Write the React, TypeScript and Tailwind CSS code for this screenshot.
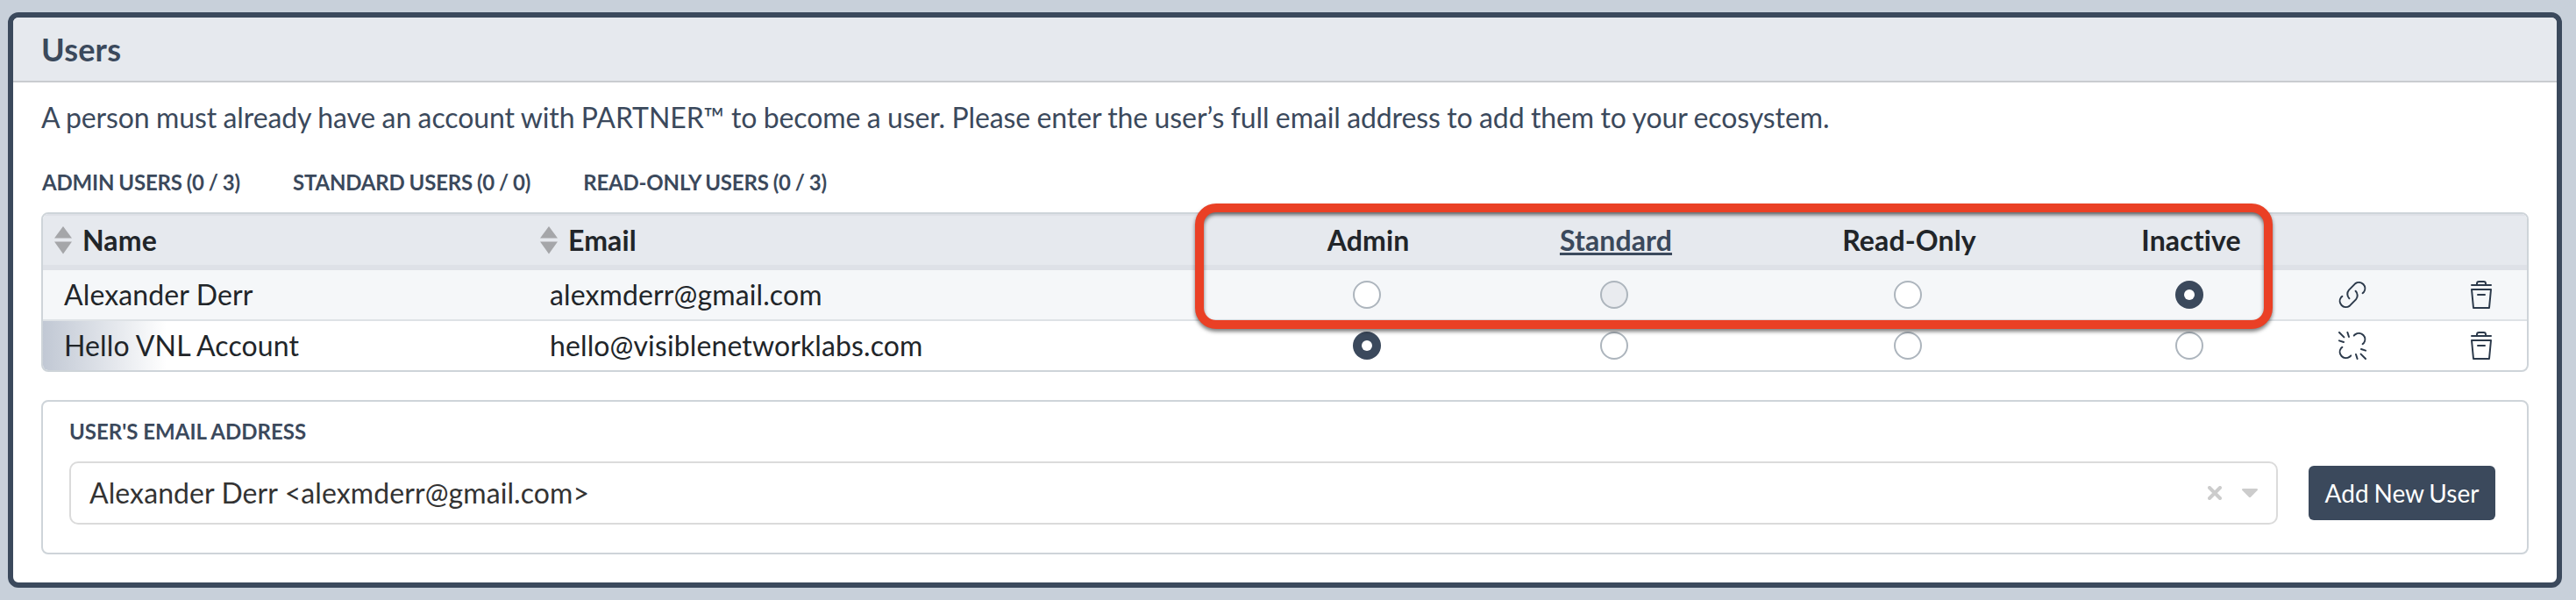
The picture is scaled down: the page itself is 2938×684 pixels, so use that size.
type RoleKey = "admin" | "standard" | "readOnly" | "inactive";

type User = {
  name: string;
  email: string;
  role: RoleKey;
  linked: boolean;
  current?: boolean;
  locked?: RoleKey;
};

const ROLES: RoleKey[] = ["admin", "standard", "readOnly", "inactive"];

const LIMITS = ["Admin Users (0 / 3)", "Standard Users (0 / 0)", "Read-Only Users (0 / 3)"];

const USERS: User[] = [
  {
    name: "Alexander Derr",
    email: "alexmderr@gmail.com",
    role: "inactive",
    linked: true,
    locked: "standard",
  },
  {
    name: "Hello VNL Account",
    email: "hello@visiblenetworklabs.com",
    role: "admin",
    linked: false,
    current: true,
  },
];

function SortIcon() {
  return (
    <svg viewBox="0 0 20 32" className="h-8 w-5 shrink-0 fill-[#a5a6a9]">
      <path d="M10 0 L20 13.5 H0 Z" />
      <path d="M0 17.5 H20 L10 31.5 Z" />
    </svg>
  );
}

function LinkIcon() {
  return (
    <svg viewBox="0 0 32 32" className="size-8 fill-none stroke-[#2c3a4b] stroke-2" strokeLinecap="round" strokeLinejoin="round">
      <path d="M12.4 20.2 A7 7 0 0 1 12 10.6 L19.4 3.1 A7 7 0 0 1 29 13 L27.6 14.2" />
      <path d="M19.6 11.8 A7 7 0 0 1 20 21.4 L12.6 28.9 A7 7 0 0 1 3 19 L4.4 17.8" />
    </svg>
  );
}

function BrokenLinkIcon() {
  return (
    <svg viewBox="0 0 32 32" className="size-8 fill-none stroke-[#2c3a4b] stroke-2" strokeLinecap="round" strokeLinejoin="round">
      <path d="M17.8 4.6 L19.4 3.1 A7 7 0 0 1 29 13 L27.6 14.2" />
      <path d="M14.2 27.4 L12.6 28.9 A7 7 0 0 1 3 19 L4.4 17.8" />
      <path d="M1 1 L6.4 6.4 M10.4 1 L12 6 M1 10.4 L6 12" />
      <path d="M31 31 L25.6 25.6 M21.6 31 L20 26 M31 21.6 L26 20" />
    </svg>
  );
}

function TrashIcon() {
  return (
    <svg viewBox="0 0 24 32" className="h-8 w-6 fill-none stroke-[#2c3a4b] stroke-2" strokeLinecap="round" strokeLinejoin="round">
      <path d="M1 5 H23" />
      <path d="M7 5 V3.4 A2.4 2.4 0 0 1 9.4 1 H14.6 A2.4 2.4 0 0 1 17 3.4 V5" />
      <path d="M1 10 H23 L21 31 H3 Z" />
      <path d="M8 16 H16" />
    </svg>
  );
}

function Radio({ checked, disabled }: { checked: boolean; disabled: boolean }) {
  if (checked) {
    return (
      <span className="flex size-8 items-center justify-center rounded-full bg-[#3b495c]">
        <span className="size-3 rounded-full bg-white" />
      </span>
    );
  }
  return (
    <span
      className={
        disabled
          ? "size-8 rounded-full border-2 border-[#adb5bd] bg-[#e9ebef]"
          : "size-8 rounded-full border-2 border-[#adb5bd] bg-white"
      }
    />
  );
}

function UserRow({ user, last }: { user: User; last: boolean }) {
  const cell = last ? "p-0" : "border-b-2 border-[#dee2e6] p-0";

  return (
    <tr className={last ? "h-14" : "h-[58px] bg-[#f5f7f9]"}>
      <td className={cell}>
        <div
          className={
            user.current
              ? "flex h-14 items-center bg-linear-to-r from-[#c1c8d4] to-white to-[141px] pl-6"
              : "flex h-14 items-center pl-6"
          }
        >
          {user.name}
        </div>
      </td>
      <td className={cell}>
        <div className="pl-[25px]">{user.email}</div>
      </td>
      {ROLES.map((role) => (
        <td key={role} className={cell}>
          <div className="flex justify-center">
            <Radio checked={user.role === role} disabled={user.locked === role} />
          </div>
        </td>
      ))}
      <td className={cell}>
        <div className="flex justify-center">{user.linked ? <LinkIcon /> : <BrokenLinkIcon />}</div>
      </td>
      <td className={cell}>
        <div className="flex justify-center pl-[47px]">
          <TrashIcon />
        </div>
      </td>
    </tr>
  );
}

function UsersTable() {
  const th = "border-t-2 border-b-6 border-[#dee1e7] p-0 text-center font-bold";

  return (
    <div className="relative mt-[18px]">
      <div className="overflow-hidden rounded-lg border-2 border-[#ced4d9]">
        <table className="w-full table-fixed border-separate border-spacing-0 text-[32px] leading-10 tracking-[0.12px] text-[#212529]">
          <colgroup>
            <col className="w-[553px]" />
            <col className="w-[827px]" />
            <col className="w-[260px]" />
            <col className="w-[304px]" />
            <col className="w-[366px]" />
            <col className="w-[276px]" />
            <col className="w-[96px]" />
            <col className="w-[151px]" />
          </colgroup>
          <thead>
            <tr className="h-16 bg-[#e6e9ee]">
              <th className={th}>
                <div className="flex items-center gap-3 pl-[13px]">
                  <SortIcon />
                  Name
                </div>
              </th>
              <th className={th}>
                <div className="flex items-center gap-3 pl-3.5">
                  <SortIcon />
                  Email
                </div>
              </th>
              <th className={th}>
                <div className="pl-[3px]">Admin</div>
              </th>
              <th className={th}>
                <div className="pl-1">
                  <a className="text-[#3b495c] underline decoration-3 underline-offset-2">Standard</a>
                </div>
              </th>
              <th className={th}>
                <div className="pl-[3px]">Read-Only</div>
              </th>
              <th className={th}>
                <div className="pl-1">Inactive</div>
              </th>
              <th className={th} />
              <th className={th} />
            </tr>
          </thead>
          <tbody>
            {USERS.map((user, i) => (
              <UserRow key={user.email} user={user} last={i === USERS.length - 1} />
            ))}
          </tbody>
        </table>
      </div>

      {/* highlight drawn over the role columns */}
      <div className="pointer-events-none absolute -top-2.5 left-[1316px] h-[143px] w-[1229px] rounded-3xl border-10 border-[#ea4025] drop-shadow-[0_3px_2px_rgba(0,0,0,0.5)]" />
    </div>
  );
}

function AddUserForm() {
  return (
    <div className="mt-8 h-44 rounded-lg border-2 border-[#ced4d9] px-[30px] pt-[18px]">
      <div className="text-2xl leading-8 font-bold text-[#3b495c] uppercase">User's Email Address</div>
      <div className="mt-[18px] flex items-center">
        <div className="flex h-18 w-[2519px] items-center rounded-[10px] border-2 border-[#dbdbdb] pr-[21px] pl-[21px]">
          <span className="flex-1 text-[32px] tracking-[0.09px] text-[#333]">
            Alexander Derr &lt;alexmderr@gmail.com&gt;
          </span>
          <svg viewBox="0 0 16 16" className="size-4 stroke-[#ccc] stroke-4" strokeLinecap="round">
            <path d="M2 2 L14 14 M14 2 L2 14" />
          </svg>
          <svg viewBox="0 0 18 10" className="ml-[23px] h-2.5 w-[18px] fill-[#ccc]">
            <path d="M1.2 0 H16.8 C18 0 18.4 1.2 17.6 2 L10.2 9.4 C9.5 10.2 8.5 10.2 7.8 9.4 L0.4 2 C-0.4 1.2 0 0 1.2 0 Z" />
          </svg>
        </div>
        <button className="ml-[35px] h-[62px] w-[213px] rounded-md bg-[#3b495c] text-[28px] text-white [word-spacing:-1.3px]">
          Add New User
        </button>
      </div>
    </div>
  );
}

export default function App() {
  return (
    <main className="h-[684px] w-[2938px] bg-[#c8d0da] pt-3.5 pl-[9px] font-['Lato','Liberation_Sans',sans-serif]">
      <section className="h-[656px] w-[2913px] overflow-hidden rounded-xl border-6 border-[#3b495c] bg-white">
        <header className="flex h-[74px] items-center border-b-2 border-[#c9ccd0] bg-[#e6e9ee] pl-8">
          <h1 className="text-4xl font-bold tracking-[0.2px] text-[#3b495c]">Users</h1>
        </header>
        <div className="pr-8 pl-8">
          <p className="pt-5 text-[32px] leading-10 tracking-[-0.1px] text-[#3b495c] [word-spacing:-0.65px]">
            A person must already have an account with PARTNER™ to become a user. Please enter the user’s full email
            address to add them to your ecosystem.
          </p>
          <div className="mt-[38px] flex gap-[60px] pl-px text-2xl leading-8 font-bold tracking-[-0.18px] text-[#3b495c] uppercase [word-spacing:-0.7px]">
            {LIMITS.map((limit) => (
              <span key={limit}>{limit}</span>
            ))}
          </div>
          <UsersTable />
          <AddUserForm />
        </div>
      </section>
    </main>
  );
}
